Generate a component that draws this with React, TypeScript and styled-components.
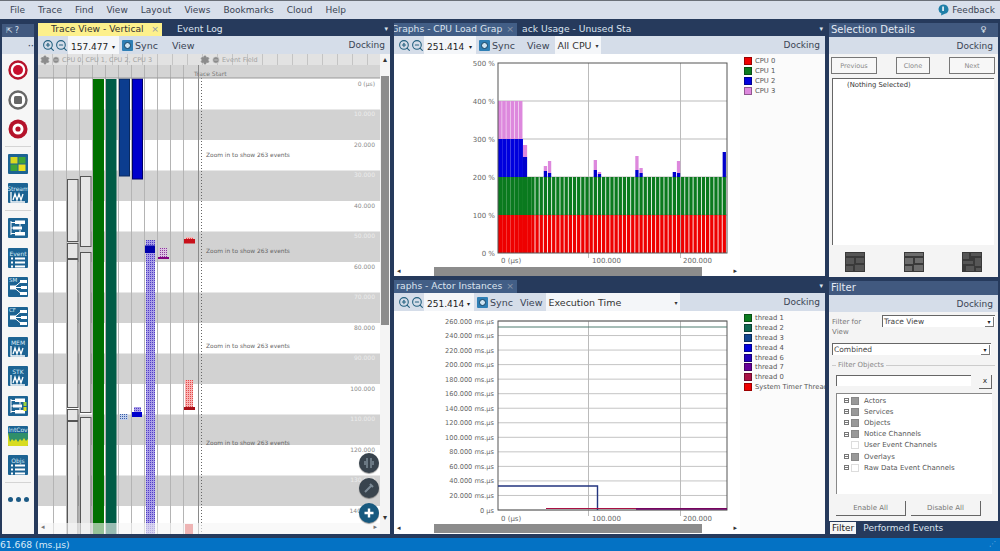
import React from 'react';
import styled, { createGlobalStyle } from 'styled-components';
import { ZoomIn, ZoomOut, Settings, MinusCircle } from 'lucide-react';

const GlobalStyle = createGlobalStyle`
    html, body {
        margin: 0;
        padding: 0;
        background: #263a5c;
    }
    * { box-sizing: border-box; }
    body {
        font-family: "DejaVu Sans", sans-serif;
        font-size: 9px;
        color: #3c4450;
    }
`;

const FONT = '"DejaVu Sans", sans-serif';

const menuItems = ['File', 'Trace', 'Find', 'View', 'Layout', 'Views', 'Bookmarks', 'Cloud', 'Help'];
const cpuLegend = [
    {name: 'CPU 0', color: '#ee0000'},
    {name: 'CPU 1', color: '#0a7a1e'},
    {name: 'CPU 2', color: '#0000dd'},
    {name: 'CPU 3', color: '#dd88dd'},
];
const actorLegend = [
    {name: 'thread 1', color: '#0a7a1e'},
    {name: 'thread 2', color: '#0f6650'},
    {name: 'thread 3', color: '#11458f'},
    {name: 'thread 4', color: '#0000dd'},
    {name: 'thread 6', color: '#2200bb'},
    {name: 'thread 7', color: '#660099'},
    {name: 'thread 0', color: '#aa1144'},
    {name: 'System Timer Thread', color: '#ee0000'},
];
const filterTree = [
    {name: 'Actors', checked: true, expand: true},
    {name: 'Services', checked: true, expand: true},
    {name: 'Objects', checked: true, expand: true},
    {name: 'Notice Channels', checked: true, expand: true},
    {name: 'User Event Channels', checked: false, expand: false},
    {name: 'Overlays', checked: true, expand: true},
    {name: 'Raw Data Event Channels', checked: false, expand: true},
];

function RecordIcon({kind}: {kind: 'record' | 'stop' | 'snap'}) {
    if (kind === 'stop') {
        return (
            <svg width="20" height="20" viewBox="0 0 20 20">
                <circle cx="10" cy="10" r="8.5" fill="#fff" stroke="#666" strokeWidth="2.4" />
                <rect x="6" y="6" width="8" height="8" rx="1.5" fill="#666" />
            </svg>
        );
    }
    if (kind === 'snap') {
        return (
            <svg width="20" height="20" viewBox="0 0 20 20">
                <circle cx="10" cy="10" r="9.5" fill="#b5132b" />
                <circle cx="10" cy="10" r="5.5" fill="#fff" />
                <circle cx="10" cy="10" r="2.6" fill="#b5132b" />
            </svg>
        );
    }
    return (
        <svg width="20" height="20" viewBox="0 0 20 20">
            <circle cx="10" cy="10" r="8.5" fill="#fff" stroke="#b5132b" strokeWidth="2.4" />
            <circle cx="10" cy="10" r="5" fill="#c8102e" />
        </svg>
    );
}

function GraphWave() {
    return (
        <svg width="16" height="11" viewBox="0 0 16 11">
            <path d="M1 0v10h14M3 8l2-6 2 6 2-6 2 6 2-6" fill="none" stroke="#fff" strokeWidth="1.3" />
        </svg>
    );
}

function FlowGlyph({variant}: {variant: 'tree' | 'branch' | 'status'}) {
    if (variant === 'branch') {
        return (
            <svg width="20" height="20" viewBox="0 0 20 20">
                <path d="M6 10.500L13 4.500M6 10.500h7M6 10.500l7 6" stroke="#fff" strokeWidth="1" fill="none" />
                <path d="M2 8.500h6v4H2zM12 3h7v3h-7zM13 9h6v3h-6zM12 15h7v3h-7z" fill="#fff" />
            </svg>
        );
    }
    return (
        <svg width="20" height="20" viewBox="0 0 20 20">
            <path d="M3 3v14M3 4.500h4M3 10h3M3 15.500h4M12 5.500v3M12 12v3" stroke="#fff" strokeWidth="1" fill="none" />
            <path d="M7 2.500h10v3.500H7zM5 8.500h9v3H5zM7 14h10v3.500H7z" fill="#fff" />
            {variant === 'status' && <path d="M15.500 6h3v4h-3z" fill="#9ccf3a" />}
            {variant === 'status' && <path d="M15.500 11h3v4h-3z" fill="#d8dc20" />}
        </svg>
    );
}

function GridGlyph() {
    return (
        <svg width="20" height="20" viewBox="0 0 20 20">
            <rect x="2.500" y="3" width="7" height="6.500" fill="#d8d820" />
            <rect x="10.500" y="3" width="7" height="6.500" fill="#3fa535" />
            <rect x="2.500" y="10.500" width="7" height="6.500" fill="#3fa535" />
            <rect x="10.500" y="10.500" width="7" height="6.500" fill="#e8e020" />
        </svg>
    );
}

function ListLines() {
    return (
        <svg width="16" height="11" viewBox="0 0 16 11">
            <path d="M1 1.500h2M5 1.500h10M1 5.500h2M5 5.500h10M1 9.500h2M5 9.500h10" stroke="#fff" strokeWidth="1.800" />
        </svg>
    );
}

function CoverageGlyph() {
    return (
        <svg width="20" height="13" viewBox="0 0 20 13">
            <rect width="20" height="13" fill="#d8dc20" />
            <path d="M0 0h20v6l-2 2-2-3-2 3-2-2-2 3-2-3-2 2-2-2-2 3z" fill="#2f8f6a" />
        </svg>
    );
}

function ThumbGlyph({variant}: {variant: number}) {
    const cells = variant === 2
        ? ['M1 1h6v6H1z', 'M9 1h10v3H9z', 'M13 6h6v8h-6z', 'M1 9h10v3H1z', 'M4 14h8v5H4z', 'M14 16h5v3h-5z']
        : ['M1 1h18v3H1z', 'M1 6h8v6H1z', 'M11 6h8v5H11z', 'M1 14h7v5H1z', 'M10 13h9v6h-9z'];
    return (
        <svg width="20" height="20" viewBox="0 0 20 20">
            <rect width="20" height="20" fill="#3a3a3a" />
            {cells.map(d => <path key={d} d={d} fill={variant === 1 ? '#6d6d6d' : '#565656'} />)}
        </svg>
    );
}

function SyncIcon() {
    return (
        <svg width="11" height="11" viewBox="0 0 11 11">
            <rect width="11" height="11" rx="1" fill="#2f7fb5" />
            <circle cx="5.500" cy="5.500" r="3" fill="#cfe4f2" stroke="#123f60" strokeWidth="1" />
        </svg>
    );
}

function ZoomGroup() {
    return (
        <ZoomIcons>
            <ZoomIn size={13} strokeWidth={2} />
            <ZoomOut size={13} strokeWidth={2} />
        </ZoomIcons>
    );
}

function Legend({items}: {items: {name: string, color: string}[]}) {
    return (
        <LegendList>
            {items.map(item => (
                <LegendRow key={item.name}>
                    <Swatch $color={item.color} />
                    <span>{item.name}</span>
                </LegendRow>
            ))}
        </LegendList>
    );
}

function HorizontalScroll() {
    return (
        <ChartScroll>
            <ScrollArrow>◂</ScrollArrow>
            <ChartThumb />
            <ScrollArrow>▸</ScrollArrow>
        </ChartScroll>
    );
}

function CpuChart() {
    const bars = Array.from({length: 55}, (_, i) => i);
    const spikes: Record<number, [number, number]> = {
        6: [157, 145], 11: [171, 166], 12: [173, 161], 23: [170, 160], 24: [174, 172],
        33: [170, 156], 34: [173, 168], 42: [172, 172], 43: [173, 161], 54: [152, 152],
    };
    return (
        <PlotSvg viewBox="394 54 346 213" width="346" height="213">
            <rect x="498" y="63" width="229" height="190" fill="#fff" />
            {[101, 139, 177, 215].map(y => <line key={y} x1="498" x2="727" y1={y} y2={y} stroke="#bbb" />)}
            {[588.5, 680.5].map(x => <line key={x} x1={x} x2={x} y1="63" y2="258" stroke="#bbb" />)}
            {bars.map(i => {
                const x = 498 + i * 4.16;
                const w = i < 8 ? 4.16 : 3.3;
                const full = i < 6;
                const spike = spikes[i];
                return (
                    <g key={i}>
                        <rect x={x} y="215" width={w} height="38" fill="#ee0000" />
                        <rect x={x} y="177" width={w} height="38" fill="#0a7a1e" />
                        {full && <rect x={x} y="139" width={w} height="38" fill="#0000dd" />}
                        {full && <rect x={x} y="101" width={w - .5} height="38" fill="#dd88dd" />}
                        {spike && <rect x={x} y={spike[1]} width={w} height={spike[0] - spike[1]} fill="#dd88dd" />}
                        {spike && <rect x={x} y={spike[0]} width={w} height={177 - spike[0]} fill="#0000cc" />}
                    </g>
                );
            })}
            <rect x="498" y="63" width="229" height="190" fill="none" stroke="#555" />
            {[['500 %', 66], ['400 %', 104], ['300 %', 142], ['200 %', 180], ['100 %', 218], ['0 %', 256]].map(([t, y]) => (
                <AxisLabel key={t} x="495" y={y} textAnchor="end">{t}</AxisLabel>
            ))}
            <AxisLabel x="501" y="263">0 (µs)</AxisLabel>
            <AxisLabel x="592" y="263">100.000</AxisLabel>
            <AxisLabel x="683" y="263">200.000</AxisLabel>
        </PlotSvg>
    );
}

function ActorChart() {
    const ticks = Array.from({length: 14}, (_, i) => i * 20);
    const yFor = (v: number) => 510 - v * (189 / 260);
    return (
        <PlotSvg viewBox="394 311 346 213" width="346" height="213">
            <rect x="498" y="321" width="229" height="189" fill="#fff" />
            {ticks.map(v => <line key={v} x1="498" x2="727" y1={yFor(v)} y2={yFor(v)} stroke="#c4c4c4" />)}
            {[588.5, 680.5].map(x => <line key={x} x1={x} x2={x} y1="321" y2="516" stroke="#bbb" />)}
            <rect x="498" y="321" width="229" height="189" fill="none" stroke="#555" />
            <line x1="498" x2="727" y1="327" y2="327" stroke="#4d7a6e" strokeWidth="1" />
            <path d="M498 486H597.500V510" fill="none" stroke="#23357f" strokeWidth="1.400" />
            <path d="M546 508.500H727" stroke="#aa1144" strokeWidth="1" />
            <path d="M636 509H727" stroke="#660066" strokeWidth="1.400" />
            {ticks.map(v => (
                <AxisSmall key={v} x="494" y={yFor(v) + 2.5} textAnchor="end">
                    {v === 0 ? '0 µs' : `${v}.000 ms.µs`}
                </AxisSmall>
            ))}
            <AxisLabel x="501" y="521">0 (µs)</AxisLabel>
            <AxisLabel x="592" y="521">100.000</AxisLabel>
            <AxisLabel x="683" y="521">200.000</AxisLabel>
        </PlotSvg>
    );
}

function TraceCanvas() {
    const stripes = [109.5, 170.5, 231.5, 292.5, 353.5, 414.5, 475.5];
    const lines = [53, 66, 79, 92, 105, 118, 131, 144, 157, 170, 183];
    const times = ['0 (µs)', '10.000', '20.000', '30.000', '40.000', '50.000', '60.000', '70.000', '80.000', '90.000', '100.000', '110.000', '120.000', '130.000'];
    const slots = [
        {x: 67, y: 179, h: 62}, {x: 67, y: 243, h: 15}, {x: 67, y: 259, h: 148}, {x: 67, y: 409, h: 11}, {x: 67, y: 421, h: 114},
        {x: 80, y: 176, h: 70}, {x: 80, y: 252, h: 160}, {x: 80, y: 417, h: 118},
    ];
    return (
        <TraceSvg viewBox="38 65 342 469" width="342" height="469">
            <defs>
                <pattern id="hatchPurple" width="2" height="2" patternUnits="userSpaceOnUse">
                    <rect width="2" height="2" fill="#a99ee8" />
                    <rect width="1" height="1" fill="#4f3cc4" />
                </pattern>
                <pattern id="hatchRed" width="2" height="2" patternUnits="userSpaceOnUse">
                    <rect width="2" height="2" fill="#f9b4b4" />
                    <rect width="1" height="1" fill="#e24a4a" />
                </pattern>
                <pattern id="hatchViolet" width="2" height="2" patternUnits="userSpaceOnUse">
                    <rect width="2" height="2" fill="#dcc0e2" />
                    <rect width="1" height="1" fill="#8a3a9a" />
                </pattern>
                <pattern id="hatchBlue" width="2" height="2" patternUnits="userSpaceOnUse">
                    <rect width="2" height="2" fill="#c2d0ec" />
                    <rect width="1" height="1" fill="#3a5ea8" />
                </pattern>
            </defs>
            <rect x="38" y="65" width="342" height="13" fill="#d4d4d4" />
            <rect x="38" y="78" width="342" height="456" fill="#fff" />
            {stripes.map(y => <rect key={y} x="38" y={y} width="342" height="30.5" fill="#d2d2d2" />)}
            {lines.map(x => <line key={x} x1={x + .5} x2={x + .5} y1="65" y2="534" stroke="#b4b4b4" />)}
            <rect x="93" y="79" width="11" height="455" fill="#007000" />
            <rect x="106" y="79" width="10.500" height="455" fill="#005c46" />
            <rect x="119.500" y="79" width="10" height="97" fill="#0c3d8f" stroke="#0a2a60" />
            <rect x="132.500" y="79" width="10" height="100" fill="#0000cc" stroke="#00006a" />
            {slots.map(s => (
                <rect key={s.x + '-' + s.y} x={s.x + .5} y={s.y + .5} width="10.500" height={s.h} fill="#e6e6e6" stroke="#555" />
            ))}
            <rect x="146" y="240" width="9" height="294" fill="url(#hatchPurple)" />
            <rect x="145" y="245.500" width="10" height="7.500" fill="#0000aa" />
            <rect x="159" y="248" width="8" height="9" fill="url(#hatchViolet)" />
            <rect x="158" y="257" width="11" height="2" fill="#800080" />
            <rect x="186" y="237" width="7" height="3" fill="url(#hatchRed)" />
            <rect x="184" y="239" width="11" height="4.500" fill="#c8101a" />
            <rect x="185" y="380" width="8" height="27" fill="url(#hatchRed)" />
            <rect x="184" y="407" width="11" height="3" fill="#a80f18" />
            <rect x="185" y="524" width="8" height="10" fill="#e24a4a" />
            <rect x="120" y="414" width="8" height="6" fill="url(#hatchBlue)" />
            <rect x="134" y="407" width="7" height="5" fill="url(#hatchPurple)" />
            <rect x="132" y="412" width="10" height="5" fill="#0000cc" />
            <line x1="198.500" x2="198.500" y1="65" y2="534" stroke="#8a8a8a" />
            <line x1="201.500" x2="201.500" y1="78" y2="534" stroke="#666" strokeDasharray="1 2" />
            <line x1="38" x2="380" y1="78" y2="78" stroke="#999" />
            <TraceStart x="194" y="75.500">Trace Start</TraceStart>
            {times.map((t, i) => (
                <TimeLabel key={t} x="375" y={85.5 + i * 30.5} textAnchor="end" $light={i % 2 === 1}>{t}</TimeLabel>
            ))}
            <TimeLabel x="361" y="512.500" textAnchor="end">140</TimeLabel>
            {[156.5, 252.5, 347.5, 444.5].map(y => <ZoomHint key={y} x="206" y={y}>Zoom in to show 263 events</ZoomHint>)}
        </TraceSvg>
    );
}

export default function App() {
    return (
        <Page>
            <GlobalStyle />
            <MenuBar>
                {menuItems.map(item => <MenuItem key={item}>{item}</MenuItem>)}
                <Feedback>
                    <svg width="12" height="12" viewBox="0 0 12 12">
                        <path d="M6 .5a5.300 4.800 0 0 1 2 9.300L4 11.500l.4-2A5.300 4.800 0 0 1 6 .5z" fill="#1f7fa8" />
                        <rect x="5.300" y="2.500" width="1.500" height="4.500" fill="#fff" />
                    </svg>
                    <span>Feedback</span>
                </Feedback>
            </MenuBar>

            <Workspace>
                <SideRail>
                    <RailHeader>
                        <span>⇱</span><span>?</span>
                    </RailHeader>
                    <RailStrip>··</RailStrip>
                    <RailBody>
                        <RecordIcon kind="record" />
                        <RecordIcon kind="stop" />
                        <RecordIcon kind="snap" />
                        <RailDivider />
                        <Tile><GridGlyph /></Tile>
                        <Tile><TileCaption>Stream</TileCaption><GraphWave /></Tile>
                        <RailDivider />
                        <Tile><FlowGlyph variant="tree" /></Tile>
                        <Tile><TileCaption>Event</TileCaption><ListLines /></Tile>
                        <Tile><TileOverlay>SM</TileOverlay><FlowGlyph variant="branch" /></Tile>
                        <Tile><TileOverlay>CF</TileOverlay><FlowGlyph variant="branch" /></Tile>
                        <Tile><TileCaption>MEM</TileCaption><GraphWave /></Tile>
                        <Tile><TileCaption>STK</TileCaption><GraphWave /></Tile>
                        <Tile><FlowGlyph variant="status" /></Tile>
                        <Tile><TileCaption>IntCov</TileCaption><CoverageGlyph /></Tile>
                        <Tile><TileCaption>Objs</TileCaption><ListLines /></Tile>
                        <RailDivider />
                        <RailDots><i /><i /><i /></RailDots>
                    </RailBody>
                </SideRail>

                <TracePanel>
                    <TabBar>
                        <ActiveYellowTab>Trace View - Vertical<TabClose>×</TabClose></ActiveYellowTab>
                        <PlainTab $left={15}>Event Log</PlainTab>
                        <TabCaret>▾</TabCaret>
                    </TabBar>
                    <Toolbar>
                        <ZoomGroup />
                        <ValueBox $width={51}>157.477<small>▾</small></ValueBox>
                        <SyncGroup $left={3}><SyncIcon /><span>Sync</span></SyncGroup>
                        <ToolText $left={14}>View</ToolText>
                        <Docking>Docking</Docking>
                    </Toolbar>
                    <TraceBody>
                        <TraceColumn>
                            <TraceHeader>
                                <HeaderGroup $width={160}>
                                    <Settings size={10} fill="#8c8c8c" color="#8c8c8c" />
                                    <MinusCircle size={8} fill="#8c8c8c" color="#e0e0e0" />
                                    <span>CPU 0, CPU 1, CPU 2, CPU 3</span>
                                </HeaderGroup>
                                <HeaderGroup $width={120}>
                                    <Settings size={10} fill="#8c8c8c" color="#8c8c8c" />
                                    <MinusCircle size={8} fill="#8c8c8c" color="#e0e0e0" />
                                    <span>Event Field</span>
                                </HeaderGroup>
                            </TraceHeader>
                            <TraceCanvas />
                            <TraceScroll>
                                <ScrollArrow>◂</ScrollArrow>
                                <ScrollArrow>▸</ScrollArrow>
                            </TraceScroll>
                        </TraceColumn>
                        <VerticalScroll>
                            <VerticalArrow>▴</VerticalArrow>
                            <VerticalThumb />
                            <VerticalEnd>▾</VerticalEnd>
                        </VerticalScroll>
                        <FloatStack>
                            <FloatButton><svg width="12" height="12" viewBox="0 0 12 12"><path d="M4 1v10M8 1v10M2 4v4M10 4v4" stroke="#7c8a96" strokeWidth="1.500" /></svg></FloatButton>
                            <FloatButton><svg width="12" height="12" viewBox="0 0 12 12"><path d="M2 10l6-6M7 2l3 3" stroke="#7c8a96" strokeWidth="2" /></svg></FloatButton>
                            <FloatButton $accent><svg width="12" height="12" viewBox="0 0 12 12"><path d="M6 1.500v9M1.500 6h9" stroke="#fff" strokeWidth="2.400" /></svg></FloatButton>
                        </FloatStack>
                    </TraceBody>
                </TracePanel>

                <GraphColumn>
                    <GraphPanel $grow={0}>
                        <TabBar>
                            <BlueTab $width={123}><TabLabel>Graphs - CPU Load Grap</TabLabel><TabClose>×</TabClose></BlueTab>
                            <PlainTab $left={5}>ack Usage - Unused Sta</PlainTab>
                            <TabCaret>▾</TabCaret>
                        </TabBar>
                        <Toolbar>
                            <ZoomGroup />
                            <ValueBox $width={52}>251.414<small>▾</small></ValueBox>
                            <SyncGroup $left={3}><SyncIcon /><span>Sync</span></SyncGroup>
                            <ToolText $left={12}>View</ToolText>
                            <DropBox $left={6} $width={46}>All CPU<small>▾</small></DropBox>
                            <Docking>Docking</Docking>
                        </Toolbar>
                        <ChartPane>
                            <ChartArea>
                                <CpuChart />
                                <HorizontalScroll />
                            </ChartArea>
                            <Legend items={cpuLegend} />
                        </ChartPane>
                    </GraphPanel>
                    <GraphPanel $grow={1}>
                        <TabBar>
                            <BlueTab $width={123}><TabLabel>raphs - Actor Instances</TabLabel><TabClose>×</TabClose></BlueTab>
                            <TabCaret>▾</TabCaret>
                        </TabBar>
                        <Toolbar>
                            <ZoomGroup />
                            <ValueBox $width={50}>251.414<small>▾</small></ValueBox>
                            <SyncGroup $left={3}><SyncIcon /><span>Sync</span></SyncGroup>
                            <ToolText $left={7}>View</ToolText>
                            <DropBox $left={4} $width={134}>Execution Time<small>▾</small></DropBox>
                            <Docking>Docking</Docking>
                        </Toolbar>
                        <ChartPane>
                            <ChartArea>
                                <ActorChart />
                                <HorizontalScroll />
                            </ChartArea>
                            <Legend items={actorLegend} />
                        </ChartPane>
                    </GraphPanel>
                </GraphColumn>

                <DetailColumn>
                    <DetailPanel $height={254}>
                        <DockHeader>Selection Details<PinMark>♀</PinMark></DockHeader>
                        <DockStrip><Docking>Docking</Docking></DockStrip>
                        <DetailBody>
                            <ButtonRow>
                                <PlainButton $width={46}>Previous</PlainButton>
                                <PlainButton $width={34}>Clone</PlainButton>
                                <PlainButton $width={46}>Next</PlainButton>
                            </ButtonRow>
                            <SelectionTree>(Nothing Selected)</SelectionTree>
                            <ThumbRow>
                                <ThumbGlyph variant={0} />
                                <ThumbGlyph variant={1} />
                                <ThumbGlyph variant={2} />
                            </ThumbRow>
                        </DetailBody>
                    </DetailPanel>
                    <DetailPanel $height={253}>
                        <DockHeader>Filter</DockHeader>
                        <DockStrip><Docking>Docking</Docking></DockStrip>
                        <FilterBody>
                            <FilterViewRow>
                                <FilterCaption>Filter for View</FilterCaption>
                                <SelectBox $width={113}>Trace View<SelectCaret>▾</SelectCaret></SelectBox>
                            </FilterViewRow>
                            <SelectBox $width={159}>Combined<SelectCaret>▾</SelectCaret></SelectBox>
                            <GroupBox>
                                <GroupTitle>Filter Objects</GroupTitle>
                                <SearchRow>
                                    <SearchInput />
                                    <ClearButton>x</ClearButton>
                                </SearchRow>
                                <TreeBox>
                                    {filterTree.map(node => (
                                        <TreeRow key={node.name}>
                                            <Expander $visible={node.expand} />
                                            <CheckMark $checked={node.checked} />
                                            <span>{node.name}</span>
                                        </TreeRow>
                                    ))}
                                </TreeBox>
                                <GroupButtons>
                                    <RaisedButton>Enable All</RaisedButton>
                                    <RaisedButton>Disable All</RaisedButton>
                                </GroupButtons>
                            </GroupBox>
                        </FilterBody>
                        <BottomTabs>
                            <BottomTab $active>Filter</BottomTab>
                            <BottomTab>Performed Events</BottomTab>
                        </BottomTabs>
                    </DetailPanel>
                </DetailColumn>
            </Workspace>

            <StatusBar>
                <span>61.668 (ms.µs)</span>
                <ResizeGrip>⋰</ResizeGrip>
            </StatusBar>
        </Page>
    );
}

const Page = styled.div`
    width: 1000px;
    height: 551px;
    display: flex;
    flex-direction: column;
    overflow: hidden;
`;
const MenuBar = styled.header`
    height: 19px;
    flex: none;
    display: flex;
    align-items: center;
    gap: 13px;
    padding: 0 5px 0 10px;
    background: #d8dfeb;
    border-top: 1px solid #6a6f78;
`;
const MenuItem = styled.span`
    font-size: 9px;
    color: #3a4454;
`;
const Feedback = styled.div`
    margin-left: auto;
    display: flex;
    align-items: center;
    gap: 3px;
    font-size: 9px;
    color: #3a4454;
`;
const Workspace = styled.main`
    flex: 1;
    min-height: 0;
    display: flex;
    gap: 4px;
    padding: 4px 2px 4px 2px;
    background: #263a5c;
`;
const SideRail = styled.aside`
    width: 32px;
    flex: none;
    display: flex;
    flex-direction: column;
    margin-top: 1px;
`;
const RailHeader = styled.div`
    height: 13px;
    flex: none;
    display: flex;
    gap: 2px;
    padding-left: 4px;
    background: #41597f;
    color: #dfe6f0;
    font-size: 8px;
    line-height: 13px;
`;
const RailStrip = styled.div`
    height: 17px;
    flex: none;
    background: #d5dde9;
    color: #2a3a55;
    text-align: right;
    font-size: 10px;
    line-height: 17px;
`;
const RailBody = styled.div`
    flex: 1;
    display: flex;
    flex-direction: column;
    align-items: center;
    gap: 9.7px;
    padding-top: 6px;
    background: #f6f6f6;
`;
const RailDivider = styled.div`
    width: 26px;
    height: 1px;
    flex: none;
    margin: -3px 0;
    background: #d4d4d4;
`;
const Tile = styled.div`
    position: relative;
    width: 20px;
    height: 20px;
    flex: none;
    display: flex;
    flex-direction: column;
    align-items: center;
    justify-content: flex-end;
    overflow: hidden;
    border-radius: 1px;
    background: #1c6393;
`;
const TileCaption = styled.span`
    font-size: 6px;
    line-height: 7px;
    color: #d8ecf8;
    white-space: nowrap;
`;
const TileOverlay = styled.span`
    position: absolute;
    left: 1px;
    top: 0;
    font-size: 5.500px;
    line-height: 7px;
    color: #d8ecf8;
`;
const RailDots = styled.div`
    display: flex;
    gap: 3px;
    margin-top: 7px;
    i {
        width: 5px;
        height: 5px;
        border-radius: 50%;
        background: #1c5a85;
    }
`;
const TracePanel = styled.section`
    width: 352px;
    flex: none;
    display: flex;
    flex-direction: column;
`;
const TabBar = styled.div`
    height: 13px;
    flex: none;
    display: flex;
    align-items: stretch;
    font-size: 9.2px;
    line-height: 12px;
`;
const ActiveYellowTab = styled.div`
    width: 124px;
    display: flex;
    justify-content: space-between;
    padding: 0 3px 0 13px;
    background: #fdf08c;
    color: #333;
`;
const BlueTab = styled.div<{$width: number}>`
    width: ${p => p.$width}px;
    display: flex;
    justify-content: flex-end;
    padding-right: 3px;
    overflow: hidden;
    background: #425e86;
    color: #dce4ef;
`;
const TabLabel = styled.span`
    white-space: nowrap;
    flex: none;
`;
const TabClose = styled.span`
    margin-left: 4px;
    color: #8a96a8;
    flex: none;
`;
const PlainTab = styled.div<{$left: number}>`
    margin-left: ${p => p.$left}px;
    color: #dce4ef;
    white-space: nowrap;
`;
const TabCaret = styled.div`
    margin-left: auto;
    padding-right: 2px;
    color: #dce4ef;
    font-size: 7px;
`;
const Toolbar = styled.div`
    height: 18px;
    flex: none;
    display: flex;
    align-items: center;
    padding: 0 5px 0 4px;
    background: #d5dde9;
    font-size: 9.5px;
`;
const ZoomIcons = styled.div`
    display: flex;
    width: 26px;
    flex: none;
    color: #23607f;
`;
const ValueBox = styled.div<{$width: number}>`
    width: ${p => p.$width}px;
    height: 18px;
    flex: none;
    display: flex;
    align-items: center;
    justify-content: space-between;
    padding: 3px 4px 0 3px;
    background: #f4f6f9;
    color: #222;
    font-size: 9px;
    small { font-size: 6px; }
`;
const SyncGroup = styled.div<{$left: number}>`
    margin-left: ${p => p.$left}px;
    display: flex;
    align-items: center;
    gap: 2px;
    color: #3a4454;
`;
const ToolText = styled.span<{$left: number}>`
    margin-left: ${p => p.$left}px;
    color: #3a4454;
`;
const DropBox = styled.div<{$left: number, $width: number}>`
    margin-left: ${p => p.$left}px;
    width: ${p => p.$width}px;
    height: 18px;
    display: flex;
    align-items: center;
    justify-content: space-between;
    padding: 0 3px 0 2px;
    background: #f4f6f9;
    color: #333;
    small { font-size: 6px; }
`;
const Docking = styled.span`
    margin-left: auto;
    font-size: 9px;
    color: #3a4454;
`;
const TraceBody = styled.div`
    position: relative;
    flex: 1;
    min-height: 0;
    display: flex;
`;
const TraceColumn = styled.div`
    position: relative;
    width: 342px;
    flex: none;
    display: flex;
    flex-direction: column;
`;
const TraceHeader = styled.div`
    height: 11px;
    flex: none;
    display: flex;
    align-items: center;
    background-color: #e2e2e2;
    background-image: repeating-linear-gradient(90deg, transparent 0 14px, #c4c4c4 14px 15px, transparent 15px 13px);
    font-size: 6.500px;
    color: #a2a2a2;
`;
const HeaderGroup = styled.div<{$width: number}>`
    width: ${p => p.$width}px;
    display: flex;
    align-items: center;
    gap: 2px;
    padding-left: 2px;
    white-space: nowrap;
`;
const TraceSvg = styled.svg`
    display: block;
    flex: none;
`;
const TraceScroll = styled.div`
    position: absolute;
    left: 0;
    right: 0;
    bottom: 0;
    height: 11px;
    display: flex;
    justify-content: space-between;
    padding: 0 3px;
    background: rgba(245, 245, 245, .62);
    color: #777;
    font-size: 7px;
    line-height: 11px;
`;
const VerticalScroll = styled.div`
    flex: 1;
    display: flex;
    flex-direction: column;
    background: #f4f4f4;
    color: #333;
    font-size: 8px;
`;
const VerticalArrow = styled.div`
    height: 22px;
    flex: none;
    text-align: center;
    padding-top: 1px;
`;
const VerticalThumb = styled.div`
    height: 249px;
    flex: none;
    margin: 0 1px;
    background: #8c8c8c;
`;
const VerticalEnd = styled.div`
    margin-top: auto;
    padding-bottom: 12px;
    text-align: center;
    font-size: 8px;
`;
const FloatStack = styled.div`
    position: absolute;
    left: 321px;
    top: 399px;
    display: flex;
    flex-direction: column;
    gap: 5px;
`;
const FloatButton = styled.div<{$accent?: boolean}>`
    width: 20px;
    height: 20px;
    display: flex;
    align-items: center;
    justify-content: center;
    border-radius: 50%;
    background: ${p => p.$accent ? '#17597f' : '#39444e'};
    box-shadow: 0 1px 1px rgba(0,0,0,.4);
`;
const TimeLabel = styled.text<{$light?: boolean}>`
    font-family: ${FONT};
    font-size: 6px;
    fill: ${p => p.$light ? '#ededed' : '#8a8a8a'};
`;
const ZoomHint = styled.text`
    font-family: ${FONT};
    font-size: 5.900px;
    fill: #666;
`;
const TraceStart = styled.text`
    font-family: ${FONT};
    font-size: 6px;
    fill: #777;
`;
const GraphColumn = styled.div`
    width: 431px;
    flex: none;
    display: flex;
    flex-direction: column;
    gap: 4px;
`;
const GraphPanel = styled.section<{$grow: number}>`
    flex: ${p => p.$grow} 0 ${p => p.$grow ? 0 : '253px'};
    min-height: 0;
    display: flex;
    flex-direction: column;
`;
const ChartPane = styled.div`
    flex: 1;
    min-height: 0;
    display: flex;
`;
const ChartArea = styled.div`
    width: 346px;
    flex: none;
    display: flex;
    flex-direction: column;
    background: #fff;
`;
const PlotSvg = styled.svg`
    display: block;
    flex: none;
`;
const AxisLabel = styled.text`
    font-family: ${FONT};
    font-size: 7px;
    fill: #666;
`;
const AxisSmall = styled.text`
    font-family: ${FONT};
    font-size: 6.600px;
    fill: #666;
`;
const ChartScroll = styled.div`
    height: 9px;
    flex: none;
    display: flex;
    align-items: center;
    justify-content: space-between;
    padding: 0 3px;
    color: #333;
    font-size: 7px;
`;
const ScrollArrow = styled.span`
    line-height: 9px;
`;
const ChartThumb = styled.div`
    width: 268px;
    height: 9px;
    margin-left: 25px;
    margin-right: 24px;
    background: #8c8c8c;
`;
const LegendList = styled.div`
    flex: 1;
    min-width: 0;
    padding: 2px 0 0 4px;
    overflow: hidden;
    background: #fbfbfb;
`;
const LegendRow = styled.div`
    height: 9.900px;
    display: flex;
    align-items: center;
    gap: 3px;
    font-size: 6.800px;
    color: #555;
    white-space: nowrap;
`;
const Swatch = styled.i<{$color: string}>`
    width: 8px;
    height: 8px;
    flex: none;
    background: ${p => p.$color};
    border: 1px solid rgba(0,0,0,.35);
`;
const DetailColumn = styled.div`
    flex: 1;
    min-width: 0;
    display: flex;
    flex-direction: column;
    gap: 4px;
`;
const DetailPanel = styled.section<{$height: number}>`
    height: ${p => p.$height}px;
    flex: none;
    display: flex;
    flex-direction: column;
`;
const DockHeader = styled.div`
    height: 14px;
    flex: none;
    display: flex;
    justify-content: space-between;
    padding: 0 12px 0 2px;
    background: #41597f;
    color: #e4eaf3;
    font-size: 10px;
    line-height: 14px;
`;
const PinMark = styled.span`
    font-size: 8px;
`;
const DockStrip = styled.div`
    height: 17px;
    flex: none;
    display: flex;
    align-items: center;
    padding-right: 5px;
    background: #d5dde9;
`;
const DetailBody = styled.div`
    flex: 1;
    min-height: 0;
    display: flex;
    flex-direction: column;
    padding: 3px 3px 5px 2px;
    background: #f4f4f4;
`;
const ButtonRow = styled.div`
    height: 17px;
    flex: none;
    display: flex;
    justify-content: space-between;
`;
const PlainButton = styled.div<{$width: number}>`
    width: ${p => p.$width}px;
    display: flex;
    align-items: center;
    justify-content: center;
    border: 1px solid #777;
    background: #f7f7f7;
    font-size: 6.500px;
    color: #888;
`;
const SelectionTree = styled.div`
    flex: 1;
    margin: 4px 1px 0 1px;
    padding: 2px 0 0 14px;
    background: #fff;
    border-top: 1px solid #666;
    border-left: 1px solid #666;
    font-size: 6.800px;
    color: #333;
`;
const ThumbRow = styled.div`
    height: 20px;
    flex: none;
    display: flex;
    justify-content: space-between;
    margin-top: 7px;
    padding: 0 13px 0 14px;
`;
const FilterBody = styled.div`
    flex: 1;
    min-height: 0;
    display: flex;
    flex-direction: column;
    padding: 3px 3px 0 3px;
    background: #f4f4f4;
`;
const FilterViewRow = styled.div`
    height: 28px;
    flex: none;
    display: flex;
    justify-content: space-between;
    align-items: flex-start;
`;
const FilterCaption = styled.span`
    width: 40px;
    margin-top: 2px;
    font-size: 7px;
    line-height: 10px;
    color: #777;
`;
const SelectBox = styled.div<{$width: number}>`
    width: ${p => p.$width}px;
    height: 12px;
    flex: none;
    display: flex;
    align-items: center;
    justify-content: space-between;
    padding: 0 1px;
    background: #fff;
    border-top: 1px solid #666;
    border-left: 1px solid #666;
    font-size: 7.500px;
    line-height: 9px;
    color: #444;
`;
const SelectCaret = styled.span`
    width: 9px;
    text-align: center;
    font-size: 6px;
    color: #222;
    border-bottom: 1px solid #777;
    border-right: 1px solid #777;
`;
const GroupBox = styled.fieldset`
    position: relative;
    flex: 1;
    min-height: 0;
    display: flex;
    flex-direction: column;
    margin: 10px 0 0 0;
    padding: 9px 3px 0 4px;
    border: none;
    border-top: 1px solid #ccc;
`;
const GroupTitle = styled.span`
    position: absolute;
    top: -5px;
    left: 4px;
    padding: 0 2px;
    background: #f4f4f4;
    font-size: 7px;
    color: #888;
`;
const SearchRow = styled.div`
    height: 14px;
    flex: none;
    display: flex;
    justify-content: space-between;
`;
const SearchInput = styled.div`
    width: 135px;
    height: 11px;
    background: #fff;
    border-top: 1px solid #666;
    border-left: 1px solid #666;
`;
const ClearButton = styled.div`
    width: 13px;
    text-align: center;
    font-size: 7.500px;
    line-height: 12px;
    border-right: 1px solid #666;
    border-bottom: 1px solid #666;
    color: #333;
`;
const TreeBox = styled.div`
    height: 101px;
    flex: none;
    margin-top: 4px;
    padding: 1px 0 0 7px;
    background: #fff;
    border-top: 1px solid #888;
    border-left: 1px solid #888;
`;
const TreeRow = styled.div`
    height: 11.200px;
    display: flex;
    align-items: center;
    gap: 2px;
    font-size: 7px;
    color: #555;
    white-space: nowrap;
    span { margin-left: 3px; }
`;
const Expander = styled.i<{$visible: boolean}>`
    width: 5px;
    height: 5px;
    flex: none;
    border: ${p => p.$visible ? '1px solid #777' : 'none'};
    background: linear-gradient(#777, #777) center / 3px 1px no-repeat;
    ${p => !p.$visible && 'background: none;'}
`;
const CheckMark = styled.i<{$checked: boolean}>`
    width: 8px;
    height: 8px;
    flex: none;
    background: ${p => p.$checked ? '#999' : '#fff'};
    border: 1px solid ${p => p.$checked ? '#888' : '#ddd'};
`;
const GroupButtons = styled.div`
    height: 15px;
    flex: none;
    display: flex;
    gap: 5px;
    margin-top: 7px;
`;
const RaisedButton = styled.div`
    width: 70px;
    display: flex;
    align-items: center;
    justify-content: center;
    font-size: 7px;
    color: #777;
    border-right: 1px solid #666;
    border-bottom: 1px solid #666;
`;
const BottomTabs = styled.div`
    height: 12px;
    flex: none;
    display: flex;
    gap: 5px;
    margin-top: 1px;
    padding-left: 1px;
`;
const BottomTab = styled.div<{$active?: boolean}>`
    padding: 0 2px 0 2px;
    background: ${p => p.$active ? '#f6f6f6' : 'transparent'};
    color: ${p => p.$active ? '#222' : '#dce4ef'};
    font-size: 9px;
    line-height: 12px;
`;
const StatusBar = styled.footer`
    height: 13px;
    flex: none;
    display: flex;
    justify-content: space-between;
    padding-right: 4px;
    background: #0472c4;
    color: #dbeaf6;
    font-size: 9.2px;
    line-height: 13px;
`;
const ResizeGrip = styled.span`
    font-size: 7px;
    color: #8fc0e4;
`;
